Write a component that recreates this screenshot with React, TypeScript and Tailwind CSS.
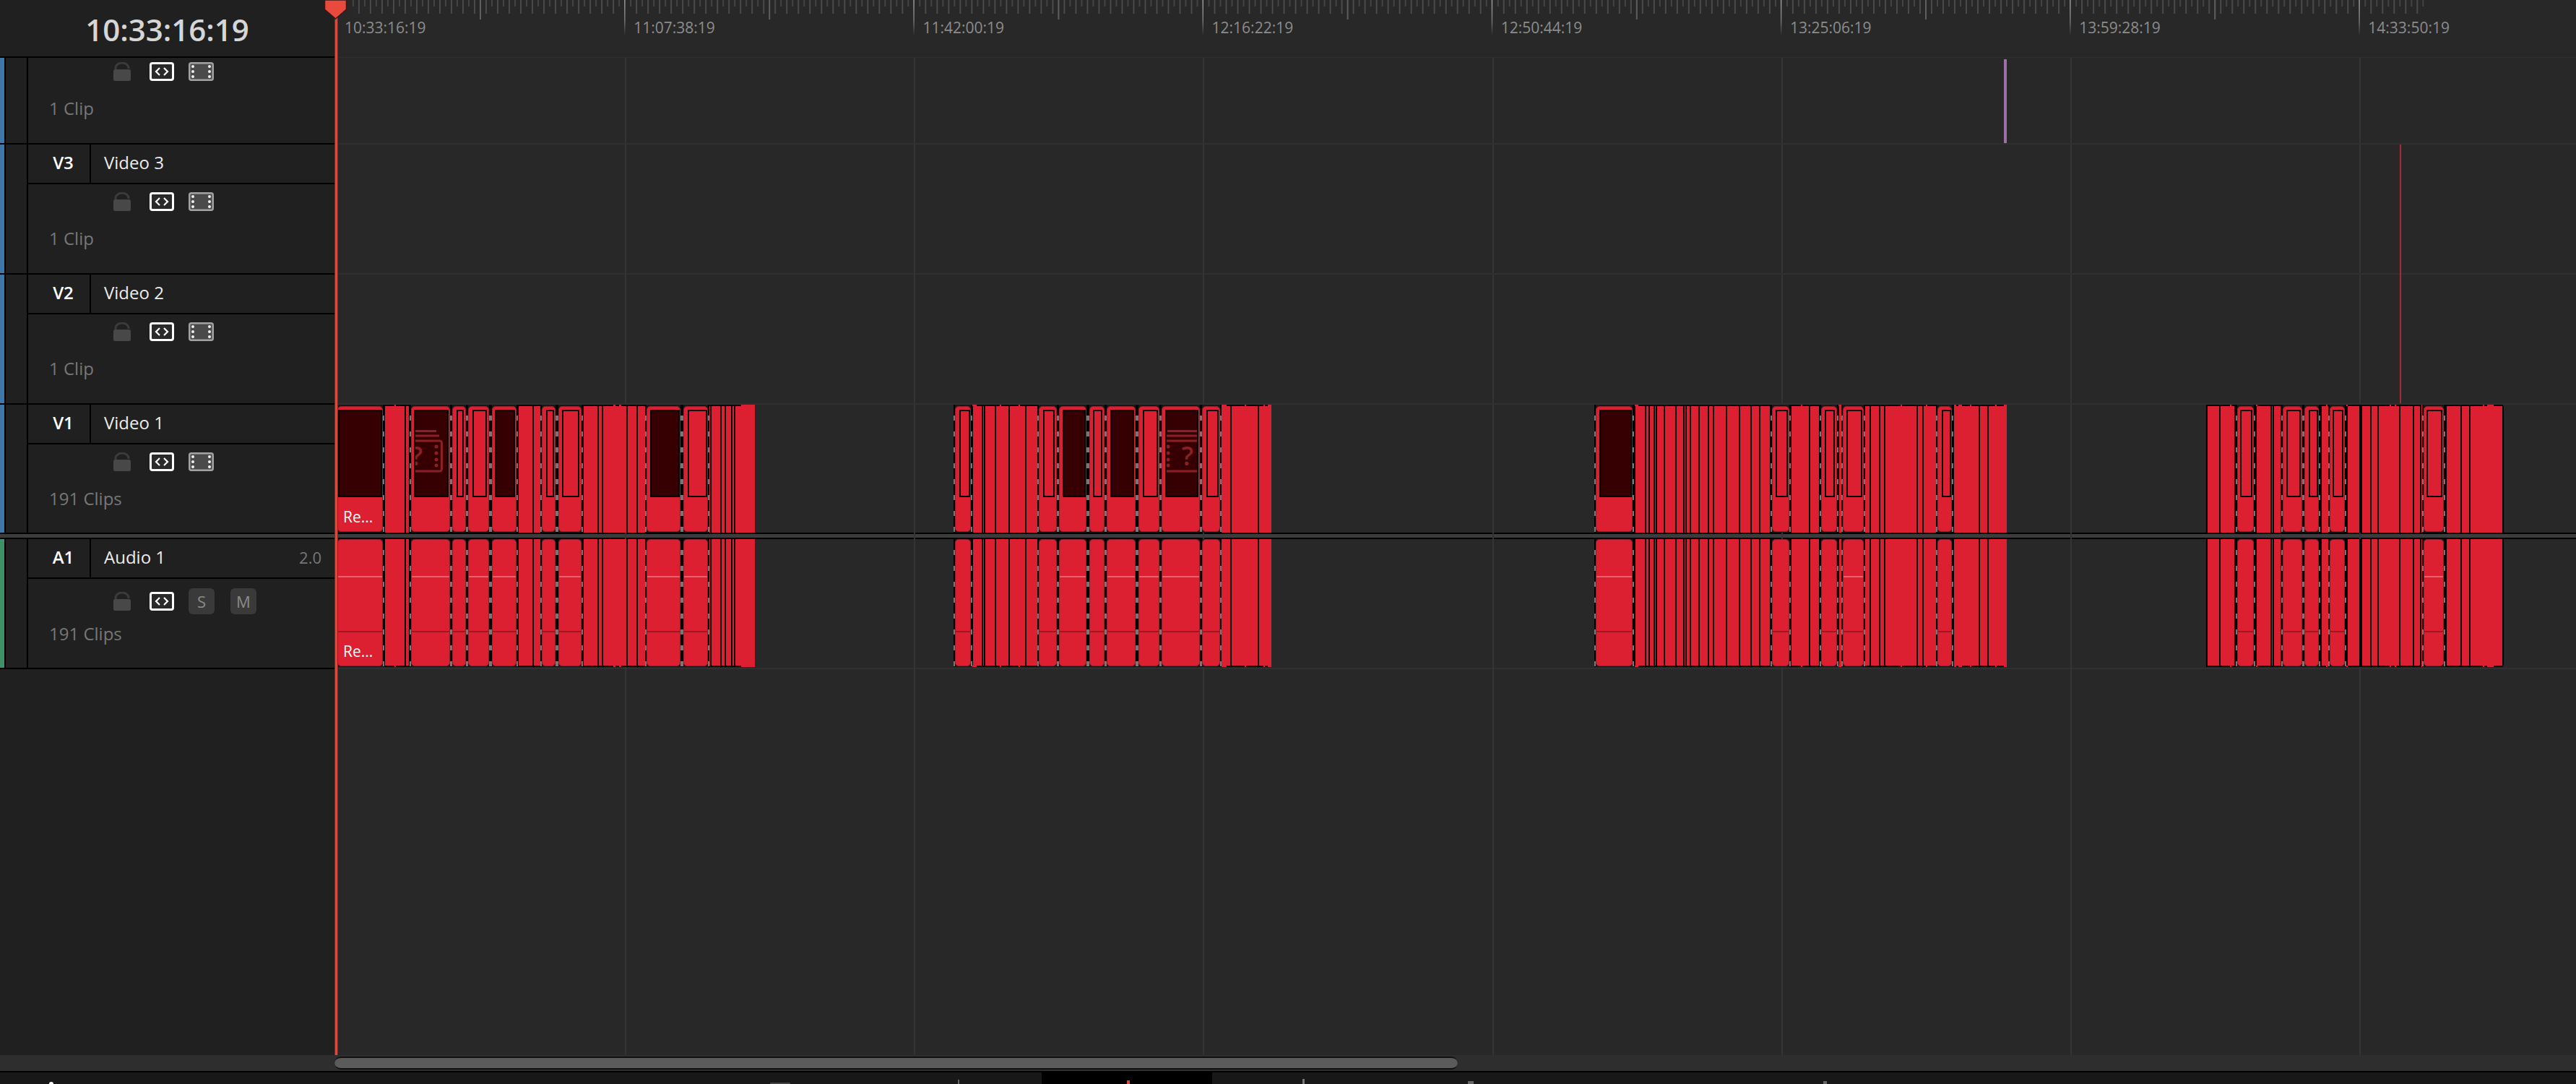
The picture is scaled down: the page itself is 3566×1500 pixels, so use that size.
import React from "react";

const X0 = 463;

type Clip = [number, number, number, number, number, number, number?];
// x0, x1, thumb x0, thumb x1, dark thumb, pale audio line, ghost icon centre
type Cluster = { start: number; end: number; lines: number[]; clips: Clip[]; stubs: [number, number][] };

const clusters: Cluster[] = [
  {
    start: 467,
    end: 1045,
    lines: [531, 560, 566, 716, 737, 748, 806, 827, 833, 867, 881, 893, 983, 997, 1003, 1012, 1016],
    stubs: [[546, 548], [849, 852], [857, 860], [1026, 1045]],
    clips: [
      [467, 530, 467, 528, 1, 1],
      [569, 623, 572, 620, 1, 1, 576],
      [626, 645, 631, 641, 0, 0],
      [648, 677, 653, 673, 0, 1],
      [681, 715, 684, 712, 1, 1],
      [750, 769, 755, 766, 0, 0],
      [773, 805, 777, 801, 0, 1],
      [895, 942, 899, 940, 1, 1],
      [946, 980, 951, 978, 0, 1],
    ],
  },
  {
    start: 1322,
    end: 1760,
    lines: [1345, 1359, 1362, 1377, 1396, 1419, 1436, 1703, 1741],
    stubs: [[1346, 1352], [1384, 1386], [1410, 1412], [1690, 1698], [1723, 1725], [1749, 1751], [1755, 1760]],
    clips: [
      [1322, 1344, 1327, 1342, 0, 0],
      [1438, 1463, 1443, 1459, 0, 0],
      [1466, 1504, 1470, 1502, 1, 1],
      [1508, 1529, 1512, 1525, 0, 0],
      [1532, 1572, 1536, 1569, 1, 1],
      [1576, 1605, 1581, 1602, 0, 1],
      [1608, 1661, 1612, 1658, 1, 1, 1643],
      [1664, 1689, 1669, 1686, 0, 0],
    ],
  },
  {
    start: 2208,
    end: 2778,
    lines: [2262, 2277, 2282, 2289, 2292, 2303, 2319, 2330, 2333, 2339, 2351, 2364, 2371, 2389, 2407, 2423, 2435, 2450, 2478, 2504, 2518, 2544, 2550, 2588, 2601, 2608, 2653, 2661, 2680, 2703, 2739, 2751],
    stubs: [[2263, 2268], [2493, 2495], [2545, 2550], [2631, 2633], [2666, 2668], [2705, 2708], [2711, 2716], [2727, 2729], [2762, 2764], [2774, 2778]],
    clips: [
      [2209, 2260, 2213, 2258, 1, 1],
      [2453, 2477, 2457, 2474, 0, 0],
      [2521, 2543, 2525, 2539, 0, 0],
      [2551, 2580, 2555, 2577, 0, 1],
      [2682, 2702, 2687, 2700, 0, 0],
    ],
  },
  {
    start: 3054,
    end: 3465,
    lines: [3054, 3072, 3093, 3122, 3143, 3146, 3157, 3212, 3223, 3248, 3266, 3268, 3281, 3291, 3321, 3340, 3350, 3385, 3406, 3418, 3464],
    stubs: [[3087, 3089], [3123, 3125], [3220, 3222], [3248, 3250], [3308, 3310], [3315, 3317], [3352, 3354], [3437, 3439], [3443, 3452]],
    clips: [
      [3097, 3120, 3100, 3117, 0, 0],
      [3160, 3187, 3164, 3184, 0, 0],
      [3190, 3210, 3195, 3208, 0, 0],
      [3225, 3246, 3228, 3243, 0, 0],
      [3355, 3383, 3358, 3380, 0, 1],
    ],
  },
];

const labels = ["10:33:16:19", "11:07:38:19", "11:42:00:19", "12:16:22:19", "12:50:44:19", "13:25:06:19", "13:59:28:19", "14:33:50:19"];
const ticks = Array.from({ length: 360 }, (_, i) => i - 23);
const gridLines = [0, 1, 2, 3, 4, 5, 6].map((i) => 865 + i * 400.2);

function GhostIcon({ left }: { left: number }) {
  return (
    <svg className="absolute top-[26px]" style={{ left }} width="72" height="60" viewBox="0 0 72 60" fill="none" stroke="#8a1f24" strokeWidth="3">
      <path d="M8 1.5H63" />
      <path d="M4 8H67" />
      <rect x="1.5" y="15" width="69" height="42" rx="3" />
      <g fill="#8a1f24" stroke="none">
        {[23, 32, 41, 49].map((y) => (
          <React.Fragment key={y}>
            <circle cx="9" cy={y} r="2.5" />
            <circle cx="63" cy={y} r="2.5" />
          </React.Fragment>
        ))}
        <text x="36" y="49" textAnchor="middle" fontSize="36" fontWeight="600" fontFamily="Open Sans, sans-serif">?</text>
      </g>
    </svg>
  );
}

function RoundClip({ c, kind, label, start }: { c: Clip; kind: "v" | "a"; label: boolean; start: number }) {
  const [x0, x1, t0, t1, dark, pale, ghost] = c;
  return (
    <div className="absolute top-0 bottom-0 bg-[#181818]" style={{ left: x0 - 2 - start, width: x1 - x0 + 4 }}>
      {label ? null : (
        <div className="absolute left-0 top-0 bottom-0 w-[2px] bg-[repeating-linear-gradient(180deg,#000_0,#000_15px,#777_15px,#777_22px)]" />
      )}
      <div className="absolute right-0 top-0 bottom-0 w-[2px] bg-[repeating-linear-gradient(180deg,#000_0,#000_15px,#777_15px,#777_22px)]" />
      <div className={`absolute left-[2px] right-[2px] bottom-[1px] rounded-[5px] border border-[#8f1f2a] bg-[#dc2031] overflow-hidden ${kind === "v" ? "top-[2px]" : "top-0"}`}>
        {kind === "v" ? (
          <div
            className={`absolute top-[4px] h-[121px] border-2 border-black overflow-hidden ${dark ? "bg-[#360003]" : "bg-[#dc2031]"}`}
            style={{ left: t0 - x0, width: t1 - t0 }}
          >
            {ghost ? <GhostIcon left={ghost - 36 - t0 - 2} /> : null}
          </div>
        ) : (
          <>
            {pale ? <div className="absolute left-0 right-0 top-[50px] h-[2px] bg-[#e9616f]" /> : null}
            <div className="absolute left-0 right-0 top-[126px] h-[2px] bg-[#a01622]" />
          </>
        )}
        {label ? (
          <span className="absolute left-[7px] bottom-[6px] text-[21px] leading-7 font-medium text-white [font-family:'Open_Sans',sans-serif]">Re...</span>
        ) : null}
      </div>
    </div>
  );
}

function ClipTrack({ kind }: { kind: "v" | "a" }) {
  return (
    <>
      {clusters.map((cl, ci) => (
        <div
          key={cl.start}
          className={`absolute top-0 bottom-0 border-black bg-[#dc2031] ${kind === "v" ? "border-t-2" : "border-b-2"}`}
          style={{ left: cl.start - X0, width: cl.end - cl.start }}
        >
          {cl.lines.map((x) => (
            <div key={x} className="absolute inset-y-0 w-[2px] bg-black" style={{ left: x - cl.start }} />
          ))}
          {cl.stubs.map(([a, b]) => (
            <div
              key={a}
              className={`absolute h-[2px] bg-[#dc2031] ${kind === "v" ? "-top-[2px]" : "-bottom-[2px]"}`}
              style={{ left: a - cl.start, width: b - a }}
            />
          ))}
          <div className={`absolute inset-x-0 ${kind === "v" ? "-top-[2px] bottom-0" : "top-0 -bottom-[2px]"}`}>
            {cl.clips.map((c, i) => (
              <RoundClip key={c[0]} c={c} kind={kind} start={cl.start} label={ci === 0 && i === 0} />
            ))}
          </div>
        </div>
      ))}
    </>
  );
}

function LockIcon() {
  return (
    <svg width="24" height="26" viewBox="0 0 24 26" className="shrink-0">
      <path d="M3 12V8a8.5 6.5 0 0 1 18 0v1" fill="none" stroke="#3b3b3b" strokeWidth="3" />
      <rect x="0" y="10" width="24" height="16" rx="2.5" fill="#484848" />
    </svg>
  );
}

function CodeIcon() {
  return (
    <svg width="34" height="26" viewBox="0 0 34 26" className="shrink-0">
      <rect x="1.5" y="1.5" width="31" height="23" rx="2.5" fill="#2a2a2a" stroke="#fff" strokeWidth="3" />
      <path d="M14 8l-5 5 5 5M20 8l5 5-5 5" fill="none" stroke="#fff" strokeWidth="2.2" />
    </svg>
  );
}

function FilmIcon() {
  return (
    <svg width="35" height="26" viewBox="0 0 35 26" className="shrink-0">
      <rect x="1.25" y="1.25" width="32.5" height="23.5" rx="2.5" fill="#4a4a4a" stroke="#a2a2a2" strokeWidth="2.5" />
      {[6, 13, 20].map((y) => (
        <React.Fragment key={y}>
          <circle cx="6" cy={y} r="2" fill="#f0f0f0" />
          <circle cx="29" cy={y} r="2" fill="#f0f0f0" />
        </React.Fragment>
      ))}
    </svg>
  );
}

function TrackHead({ id, name, extra }: { id: string; name: string; extra?: string }) {
  return (
    <div className="flex h-[55px] shrink-0 border-b-2 border-black">
      <div className="flex w-[87px] items-center justify-center border-r-2 border-black pb-[3px] pl-[12px] text-[24px] font-semibold text-white">{id}</div>
      <div className="flex flex-1 items-center justify-between pb-[3px] pl-[18px] pr-[18px] text-[24px] text-[#ececec]">
        <span>{name}</span>
        {extra ? <span className="text-[22px] text-[#777777]">{extra}</span> : null}
      </div>
    </div>
  );
}

function VideoPanel({ clips, top = 11 }: { clips: string; top?: number }) {
  return (
    <div className="flex flex-col" style={{ paddingTop: top }}>
      <div className="flex items-center pl-[118px]">
        <LockIcon />
        <div className="ml-[26px]"><CodeIcon /></div>
        <div className="ml-[20px]"><FilmIcon /></div>
      </div>
      <div className="mt-[22px] pl-[29px] text-[24px] leading-8 text-[#777777]">{clips}</div>
    </div>
  );
}

function Side({ strip, children, className }: { strip: string; children: React.ReactNode; className: string }) {
  return (
    <div className={`flex overflow-hidden border-b-2 border-black ${className}`}>
      <div className={`w-[6px] shrink-0 ${strip}`} />
      <div className="w-[33px] shrink-0 border-l-2 border-r-2 border-black" />
      <div className="min-w-0 flex-1">{children}</div>
    </div>
  );
}

function Separator() {
  return <div className="h-[7px] shrink-0 border-b-2 border-black bg-[#3c3c3c]" />;
}

export default function App() {
  return (
    <div className="flex h-[1500px] w-[3566px] flex-col overflow-hidden bg-[#282828] [font-family:'Open_Sans',sans-serif]">
      <div className="relative flex min-h-0 flex-1">
        {/* Track headers */}
        <div className="flex w-[463px] shrink-0 flex-col bg-[#202020]">
          <div className="flex h-[80px] shrink-0 items-center justify-center border-b-2 border-black pt-[3px] text-[42px] font-semibold text-[#d6d6d6]">10:33:16:19</div>
          <Side strip="bg-[#3d78ac]" className="h-[120px] shrink-0">
            <VideoPanel clips="1 Clip" top={6} />
          </Side>
          <Side strip="bg-[#3d78ac]" className="h-[180px] shrink-0">
            <TrackHead id="V3" name="Video 3" />
            <VideoPanel clips="1 Clip" />
          </Side>
          <Side strip="bg-[#3d78ac]" className="h-[180px] shrink-0">
            <TrackHead id="V2" name="Video 2" />
            <VideoPanel clips="1 Clip" />
          </Side>
          <Side strip="bg-[#3d78ac]" className="h-[179px] shrink-0">
            <TrackHead id="V1" name="Video 1" />
            <VideoPanel clips="191 Clips" />
          </Side>
          <Separator />
          <Side strip="bg-[#3f8f68]" className="h-[180px] shrink-0">
            <TrackHead id="A1" name="Audio 1" extra="2.0" />
            <div className="flex flex-col pt-[13px]">
              <div className="flex items-center pl-[118px]">
                <LockIcon />
                <div className="ml-[26px]"><CodeIcon /></div>
                <div className="ml-[20px] flex h-[36px] w-[36px] items-center justify-center rounded-[6px] bg-[#3a3a3a] text-[22px] font-medium text-[#8a8a8a]">S</div>
                <div className="ml-[22px] flex h-[36px] w-[36px] items-center justify-center rounded-[6px] bg-[#3a3a3a] text-[22px] font-medium text-[#8a8a8a]">M</div>
              </div>
              <div className="mt-[11px] pl-[29px] text-[24px] leading-8 text-[#777777]">191 Clips</div>
            </div>
          </Side>
          <div className="flex-1" />
        </div>

        {/* Timeline */}
        <div className="relative flex min-w-0 flex-1 flex-col">
          {gridLines.map((x) => (
            <div key={x} className="absolute top-[80px] bottom-0 w-[2px] bg-[#343434]" style={{ left: x - X0 }} />
          ))}

          <div className="relative h-[80px] shrink-0 border-b border-[#2f2f2f]">
            <svg className="absolute left-0 top-0" width="3103" height="60">
              <defs>
                <linearGradient id="major" x1="0" y1="0" x2="0" y2="48" gradientUnits="userSpaceOnUse">
                  <stop offset="0" stopColor="#9a9a9a" />
                  <stop offset="0.6" stopColor="#777777" />
                  <stop offset="1" stopColor="#2e2e2e" />
                </linearGradient>
              </defs>
              {ticks.map((n) => {
                const x = 664 + n * 8.004 - X0;
                if (x < 20) return null;
                const m = ((n % 50) + 50) % 50;
                if (m === 25) return <rect key={n} x={x} y="0" width="1.5" height="48" fill="url(#major)" />;
                if (m === 0) return <rect key={n} x={x} y="0" width="2" height="27" fill="#5e5e5e" />;
                return n % 2 !== 0 ? (
                  <rect key={n} x={x} y="0" width="2" height="19" fill="#4a4a4a" />
                ) : (
                  <rect key={n} x={x} y="0" width="2" height="9" fill="#444444" />
                );
              })}
            </svg>
            <div className="absolute left-[14px] top-[24px] flex text-[21px] leading-7 text-[#8c8c8c]">
              {labels.map((l) => (
                <span key={l} className="w-[400.2px] shrink-0">{l}</span>
              ))}
            </div>
          </div>

          <div className="relative h-[120px] shrink-0 border-b-2 border-[#303030]">
            <div className="absolute left-[2311px] top-[2px] bottom-0 w-[4px] bg-[#9d6fa6]" />
          </div>
          <div className="relative h-[180px] shrink-0 border-b-2 border-[#303030]">
            <div className="absolute left-[2859px] top-0 bottom-[-2px] w-[2px] bg-[#a82838]" />
          </div>
          <div className="relative h-[180px] shrink-0 border-b-2 border-[#303030]">
            <div className="absolute left-[2859px] top-0 bottom-0 w-[2px] bg-[#a82838]" />
          </div>
          <div className="relative h-[177px] shrink-0">
            <ClipTrack kind="v" />
          </div>
          <div className="h-[2px] shrink-0 bg-black" />
          <Separator />
          <div className="h-[180px] shrink-0 border-b-2 border-[#303030]">
            <div className="relative h-[177px]">
              <ClipTrack kind="a" />
            </div>
          </div>
          <div className="flex-1" />
        </div>

        {/* Playhead */}
        <div className="absolute left-[463px] top-0 bottom-0 w-[5px] border-x border-[#7a2a22] bg-[#d94a3c]" />
        <svg className="absolute left-[448px] top-0" width="33" height="27" viewBox="0 0 33 27">
          <path d="M1.5 0V13L16.5 26L31.5 13V0Z" fill="#ea4a3e" stroke="#3a1a16" strokeWidth="1.5" />
        </svg>
      </div>

      {/* Scroll bar */}
      <div className="flex h-[22px] shrink-0 items-center bg-[#2e2e2e]">
        <div className="ml-[463px] h-[18px] w-[1555px] rounded-[9px] border-y-2 border-[#111111] bg-[#5b5b5b]" />
      </div>
      <div className="h-[2px] shrink-0 bg-black" />

      {/* Bottom toolbar, cut off by the window edge */}
      <div className="relative h-[16px] shrink-0 bg-[#181818]">
        <div className="absolute left-[1442px] top-0 h-[16px] w-[236px] bg-black" />
        <div className="absolute left-[68px] top-[13px] h-[3px] w-[6px] rounded-t-full bg-white" />
        <div className="absolute left-[1066px] top-[14px] h-[2px] w-[28px] bg-[#444444]" />
        <div className="absolute left-[1326px] top-[10px] h-[6px] w-[2px] bg-[#666666]" />
        <div className="absolute left-[1560px] top-[11px] h-[5px] w-[4px] bg-[#e0443a]" />
        <div className="absolute left-[1803px] top-[9px] h-[7px] w-[3px] bg-[#777777]" />
        <div className="absolute left-[2032px] top-[12px] h-[4px] w-[8px] bg-[#666666]" />
        <div className="absolute left-[2524px] top-[12px] h-[4px] w-[5px] bg-[#666666]" />
      </div>
    </div>
  );
}
